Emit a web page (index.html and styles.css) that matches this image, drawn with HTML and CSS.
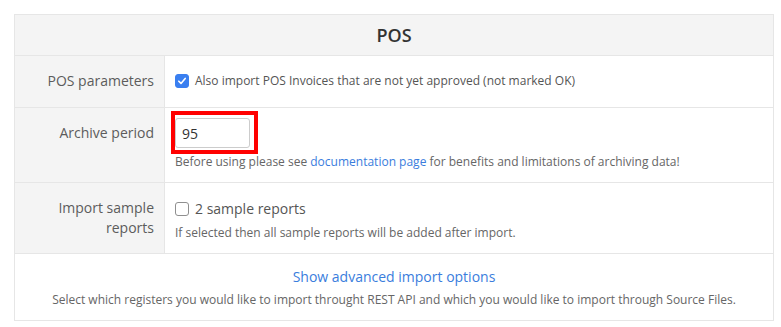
FILE: index.html
```html
<!DOCTYPE html>
<html lang="en">
<head>
<meta charset="UTF-8">
<meta name="viewport" content="width=device-width, initial-scale=1.0">
<title>POS import settings</title>
<link rel="stylesheet" href="styles.css">
</head>
<body>
<div class="panel">
<div class="panel-title">POS</div>

<div class="row">
<div class="row-label">POS parameters</div>
<div class="row-value">
<label class="check">
<span class="box checked"><svg width="10" height="10" viewBox="0 0 10 10"><path d="M1.8 5.2 L4 7.4 L8.2 2.4" fill="none" stroke="#fff" stroke-width="1.6" stroke-linecap="round" stroke-linejoin="round"/></svg></span>
Also import POS Invoices that are not yet approved (not marked OK)
</label>
</div>
</div>

<div class="row">
<div class="row-label">Archive period</div>
<div class="row-value">
<span class="highlight"><input type="text" class="field" value="95"></span>
<p class="help">Before using please see <a href="#">documentation page</a> for benefits and limitations of archiving data!</p>
</div>
</div>

<div class="row">
<div class="row-label">Import sample reports</div>
<div class="row-value">
<label class="check check-big">
<span class="box"></span>
2 sample reports
</label>
<p class="help help-tight">If selected then all sample reports will be added after import.</p>
</div>
</div>

<div class="panel-footer">
<a href="#" class="more">Show advanced import options</a>
<p class="help">Select which registers you would like to import throught REST API and which you would like to import through Source Files.</p>
</div>
</div>
</body>
</html>
```

FILE: styles.css
```css
body {
font-family: "Open Sans", Arial, sans-serif;
margin: 0;
color: #555;
background: #fff;
}
.panel {
width: 760px;
margin: 14px 0 0 14px;
border: 1px solid #e6e6e6;
box-sizing: border-box;
}
.panel-title {
background: #f4f4f4;
border-bottom: 1px solid #e6e6e6;
text-align: center;
font-size: 18px;
font-weight: 600;
color: #333;
line-height: 40px;
}
.row {
display: flex;
border-bottom: 1px solid #e6e6e6;
}
.row-label {
width: 150px;
flex-shrink: 0;
box-sizing: border-box;
background: #f4f4f4;
border-right: 1px solid #e6e6e6;
padding: 15px 10px 10px 20px;
text-align: right;
font-size: 14px;
line-height: 20px;
color: #5c5c5c;
}
.row-value {
flex: 1;
padding: 10px 10px 11px 10px;
}
.check {
display: flex;
align-items: center;
gap: 6px;
font-size: 12px;
line-height: 20px;
padding: 5px 0;
}
.check-big {
font-size: 14px;
line-height: 22px;
padding: 5px 0 0;
}
.box {
width: 12px;
height: 12px;
border: 1px solid #8f8f8f;
border-radius: 3px;
display: flex;
align-items: center;
justify-content: center;
background: #fff;
}
.box.checked {
background: #3a7ff0;
border-color: #3a7ff0;
}
.highlight {
display: inline-block;
border: 4px solid #f00;
padding: 3px 4px 2px 0;
margin: -7px 0 -6px -4px;
}
.field {
display: block;
width: 75px;
height: 30px;
box-sizing: border-box;
border: 1px solid #ccc;
border-radius: 3px;
padding: 0 6px;
font-family: inherit;
font-size: 14px;
color: #333;
}
.help {
margin: 5px 0 0;
font-size: 12px;
line-height: 18px;
color: #666;
}
.help-tight {
margin-top: 4px;
}
a {
color: #3a7ddd;
text-decoration: none;
}
.panel-footer {
text-align: center;
padding: 11px 10px 11px;
}
.more {
font-size: 14px;
line-height: 20px;
}
.panel-footer .help {
margin-top: 4px;
}
```
